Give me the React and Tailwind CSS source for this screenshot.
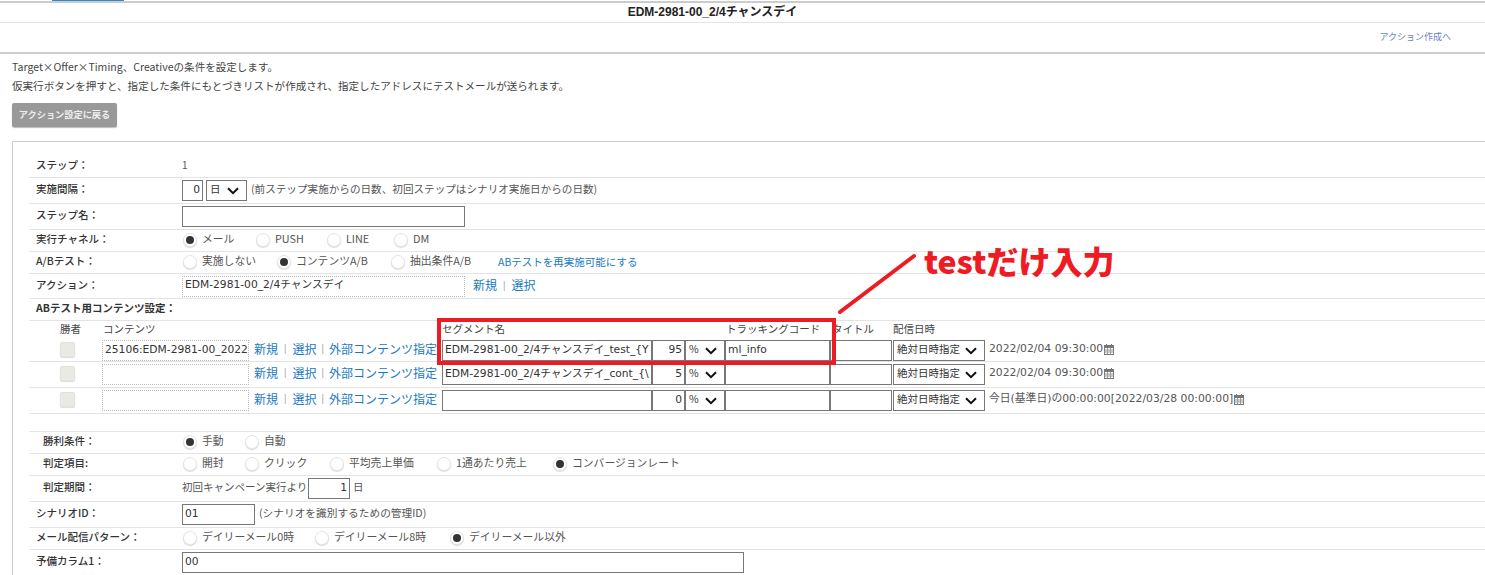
const font = { fontFamily: '"Noto Sans CJK JP", "Open Sans", sans-serif' };
const wide = { fontFamily: '"DejaVu Sans", "Noto Sans CJK JP", sans-serif' };

function Radio({ on, w, children }) {
  return (
    <span className={`flex items-center gap-[5px] shrink-0 pb-[2px] ${w}`}>
      <span className="w-[14px] h-[14px] rounded-full bg-white border border-[#e4e4e4] shadow-[0_1px_1px_#ddd] flex items-center justify-center shrink-0">
        {on && <span className="w-[8px] h-[8px] rounded-full bg-[#333]" />}
      </span>
      <span className="text-[10.8px] text-[#555] whitespace-nowrap pb-[3px]">{children}</span>
    </span>
  );
}

function Row({ label, h, children, indent, bold }) {
  return (
    <div className={`flex items-center border-b border-[#e3e3e3] ${h}`}>
      <div className={`w-[153px] shrink-0 text-[10.5px] text-[#333] whitespace-nowrap pb-[3px] ${indent ? 'pl-[14px]' : 'pl-[7px]'} ${bold ? 'font-bold' : 'font-medium'}`}>{label}</div>
      <div className="flex items-center min-w-0">{children}</div>
    </div>
  );
}

function Box({ w, right, dotted, children }) {
  return (
    <div style={wide} className={`${w} h-[21px] shrink-0 flex items-center px-[2px] pb-[1px] overflow-hidden whitespace-nowrap text-[10.7px] text-[#333] bg-white border ${dotted ? 'border-dotted border-[#bbb]' : 'border-[#777]'} ${right ? 'justify-end' : ''}`}>
      {children}
    </div>
  );
}

function Chevron() {
  return (
    <svg width="12" height="8" viewBox="0 0 12 8" className="shrink-0">
      <path d="M1 1.2 L6 6.2 L11 1.2" fill="none" stroke="#111" strokeWidth="2" />
    </svg>
  );
}

function Select({ w, children }) {
  return (
    <div className={`${w} h-[21px] shrink-0 flex items-center justify-between pl-[3px] pr-[7px] whitespace-nowrap text-[10.5px] text-[#333] bg-white border border-[#777]`}>
      <span className="pb-[3px]">{children}</span>
      <Chevron />
    </div>
  );
}

function Calendar() {
  return (
    <svg width="10" height="11" viewBox="0 0 10 11" className="shrink-0 block">
      <rect x="0.5" y="1.5" width="9" height="9" fill="#fff" stroke="#777" />
      <rect x="0.5" y="1.5" width="9" height="2.5" fill="#777" />
      <path d="M2.5 0 V2 M7.5 0 V2" stroke="#777" strokeWidth="1" fill="none" />
      <path d="M0.5 6 H9.5 M0.5 8 H9.5 M3.5 4 V10 M6.5 4 V10" stroke="#999" strokeWidth="1" fill="none" />
    </svg>
  );
}

function Links() {
  return (
    <div className="w-[193px] shrink-0 pl-[5px] pb-[4px] text-[12px] text-[#1a7abf] whitespace-nowrap flex items-center">
      <span>新規</span><span className="text-[#888] text-[9px] mx-[6px]">|</span>
      <span>選択</span><span className="text-[#888] text-[9px] mx-[5px]">|</span>
      <span>外部コンテンツ指定</span>
    </div>
  );
}

function ContentRow({ content, seg, pct, tracking, date, h }) {
  return (
    <div className={`flex items-center border-b border-[#e3e3e3] pl-[31px] ${h}`}>
      <div className="w-[42px] shrink-0 pb-[3px]"><div className="w-[15px] h-[15px] bg-[#eaeae4] rounded-[2px] border border-[#e2e2dc] shadow-[0_1px_1px_#ddd]" /></div>
      <Box w="w-[147px]" dotted>{content}</Box>
      <Links />
      <Box w="w-[210px]">{seg}</Box>
      <Box w="w-[33px]" right>{pct}</Box>
      <Select w="w-[40px]">%</Select>
      <Box w="w-[105px]">{tracking}</Box>
      <Box w="w-[62px]" />
      <div className="w-[1px] shrink-0" />
      <Select w="w-[92px]">絶対日時指定</Select>
      <span style={wide} className="ml-[4px] pb-[2px] text-[10.8px] text-[#555] whitespace-nowrap">{date}</span>
      <span className="ml-[1px] pb-[2px]"><Calendar /></span>
    </div>
  );
}

export default function App() {
  return (
    <div className="relative w-[1485px] h-[575px] overflow-hidden bg-white" style={font}>
      {/* top */}
      <div className="h-[3px] border-b-2 border-[#cccccc] pl-[52px]"><div className="w-[72px] h-[1px] bg-[#2e8bd0]" /></div>
      <div style={{ fontFamily: '"Liberation Sans", "Noto Sans CJK JP", sans-serif' }} className="h-[20px] border-b border-[#e8e3e3] flex items-center justify-center text-[12px] font-bold text-[#222] pr-[60px] pb-[2px]">EDM-2981-00_2/4チャンスデイ</div>
      <div className="h-[31px] border-b-2 border-[#cccccc] flex items-center justify-end pr-[34px] pb-[1px] text-[9px] text-[#6a85bd]">アクション作成へ</div>

      {/* intro */}
      <div className="pl-[12px] pt-[3px] text-[10.55px] leading-[19px] text-[#444]">
        <p>Target×Offer×Timing、Creativeの条件を設定します。</p>
        <p>仮実行ボタンを押すと、指定した条件にもとづきリストが作成され、指定したアドレスにテストメールが送られます。</p>
      </div>
      <div className="ml-[12px] mt-[8px] w-[105px] h-[24px] bg-[#999999] rounded-[2px] shadow-[0_1px_1px_#bbb] flex items-center justify-center text-[9.2px] font-bold text-[#eeeeee] pb-[1px]">アクション設定に戻る</div>

      {/* panel */}
      <div className="mt-[14px] ml-[12px] border-t border-l border-[#cccccc] pl-[16px] pt-[13px]">
        <Row label="ステップ：" h="h-[23px]"><span className="text-[10px] text-[#555] pb-[4px]">1</span></Row>
        <Row label="実施間隔：" h="h-[26px]">
          <Box w="w-[21px]" right>0</Box>
          <div className="w-[3px]" />
          <Select w="w-[41px]">日</Select>
          <span className="ml-[4px] pb-[3px] text-[10.6px] text-[#555] whitespace-nowrap">(前ステップ実施からの日数、初回ステップはシナリオ実施日からの日数)</span>
        </Row>
        <Row label="ステップ名：" h="h-[26px]"><Box w="w-[283px]" /></Row>
        <Row label="実行チャネル：" h="h-[22px]">
          <div className="pl-[1px] flex">
            <Radio on w="w-[73px]">メール</Radio>
            <Radio w="w-[71px]">PUSH</Radio>
            <Radio w="w-[67px]">LINE</Radio>
            <Radio w="w-[60px]">DM</Radio>
          </div>
        </Row>
        <Row label="A/Bテスト：" h="h-[22px]">
          <div className="pl-[1px] flex items-center">
            <Radio w="w-[94px]">実施しない</Radio>
            <Radio on w="w-[114px]">コンテンツA/B</Radio>
            <Radio w="w-[107px]">抽出条件A/B</Radio>
            <span className="text-[10.5px] pb-[1px] text-[#1a7abf] whitespace-nowrap">ABテストを再実施可能にする</span>
          </div>
        </Row>
        <Row label="アクション：" h="h-[25px]">
          <Box w="w-[283px]" dotted>EDM-2981-00_2/4チャンスデイ</Box>
          <span className="ml-[8px] pb-[2px] text-[12px] text-[#1a7abf]">新規</span>
          <span className="text-[#888] text-[9px] mx-[6px]">|</span>
          <span className="text-[12px] pb-[2px] text-[#1a7abf]">選択</span>
        </Row>
        <Row label="ABテスト用コンテンツ設定：" h="h-[22px]" bold />

        <div className="relative h-[19px] pb-[4px] text-[10.5px] text-[#444] whitespace-nowrap pl-[31px] flex items-center">
          <span className="w-[43px] shrink-0">勝者</span>
          <span className="w-[339px] shrink-0">コンテンツ</span>
          <span className="w-[284px] shrink-0">セグメント名</span>
          <span className="w-[106px] shrink-0">トラッキングコード</span>
          <span className="w-[61px] shrink-0">タイトル</span>
          <span>配信日時</span>
        </div>
        <ContentRow h="h-[22px]" content="25106:EDM-2981-00_2022" seg="EDM-2981-00_2/4チャンスデイ_test_{Y" pct="95" tracking="ml_info" date="2022/02/04 09:30:00" />
        <ContentRow h="h-[26px]" seg="EDM-2981-00_2/4チャンスデイ_cont_{\" pct="5" date="2022/02/04 09:30:00" />
        <ContentRow h="h-[26px]" pct="0" date="今日(基準日)の00:00:00[2022/03/28 00:00:00]" />

        <div className="h-[18px] border-b border-[#e3e3e3]" />
        <Row label="勝利条件：" h="h-[22px]" indent>
          <div className="pl-[1px] flex">
            <Radio on w="w-[62px]">手動</Radio>
            <Radio w="w-[60px]">自動</Radio>
          </div>
        </Row>
        <Row label="判定項目:" h="h-[22px]" indent>
          <div className="pl-[1px] flex">
            <Radio w="w-[62px]">開封</Radio>
            <Radio w="w-[85px]">クリック</Radio>
            <Radio w="w-[107px]">平均売上単価</Radio>
            <Radio w="w-[116px]">1通あたり売上</Radio>
            <Radio on w="w-[140px]">コンバージョンレート</Radio>
          </div>
        </Row>
        <Row label="判定期間：" h="h-[26px]" indent>
          <span className="text-[10.5px] pb-[3px] text-[#555] whitespace-nowrap w-[126px]">初回キャンペーン実行より</span>
          <Box w="w-[42px]" right>1</Box>
          <span className="ml-[3px] pb-[3px] text-[10.5px] text-[#555]">日</span>
        </Row>
        <Row label="シナリオID：" h="h-[26px]">
          <Box w="w-[73px]">01</Box>
          <span className="ml-[4px] pb-[3px] text-[10.7px] text-[#555] whitespace-nowrap">(シナリオを識別するための管理ID)</span>
        </Row>
        <Row label="メール配信パターン：" h="h-[22px]">
          <div className="pl-[1px] flex">
            <Radio w="w-[132px]">デイリーメール0時</Radio>
            <Radio w="w-[135px]">デイリーメール8時</Radio>
            <Radio on w="w-[130px]">デイリーメール以外</Radio>
          </div>
        </Row>
        <Row label="予備カラム1：" h="h-[26px]"><Box w="w-[562px]">00</Box></Row>
      </div>

      {/* annotation */}
      <div className="absolute left-[437px] top-[318px] w-[399px] h-[47px] border-4 border-[#ed1c24]" />
      <svg className="absolute left-[835px] top-[250px]" width="85" height="66" viewBox="0 0 85 66">
        <path d="M5 62 L79 6" stroke="#ed1c24" strokeWidth="4" strokeLinecap="round" fill="none" />
      </svg>
      <div className="absolute left-[924px] top-[238px] text-[32px] leading-[44px] font-black text-[#ed1c24] whitespace-nowrap">testだけ入力</div>
    </div>
  );
}
